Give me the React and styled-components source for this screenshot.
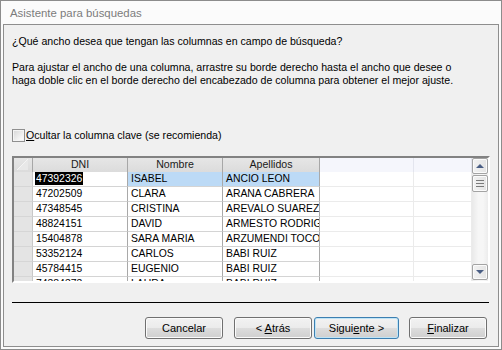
import React from "react"
import styled, { createGlobalStyle } from "styled-components"

const GlobalStyle = createGlobalStyle`
  body {
    margin: 0;
    background: #ffffff;
    font-family: "Liberation Sans", Arial, sans-serif;
  }
`

const rows = [
  ["47392326", "ISABEL", "ANCIO LEON"],
  ["47202509", "CLARA", "ARANA CABRERA"],
  ["47348545", "CRISTINA", "AREVALO SUAREZ"],
  ["48824151", "DAVID", "ARMESTO RODRIGUEZ"],
  ["15404878", "SARA MARIA", "ARZUMENDI TOCORNAL"],
  ["53352124", "CARLOS", "BABI RUIZ"],
  ["45784415", "EUGENIO", "BABI RUIZ"],
  ["74384373", "LAURA", "BABI RUIZ"],
]

// column widths: selector, DNI, Nombre, Apellidos, empty, empty
const COLS = "19px 95px 95px 97px 94px 58px"

const Window = styled.div`
  width: 502px;
  height: 350px;
  box-sizing: border-box;
  border: 1px solid #8c8c8c;
  background: #fbfbfb;
  padding: 0 2px 2px 2px;
  display: flex;
  flex-direction: column;
`

const TitleBar = styled.div`
  height: 23px;
  display: flex;
  align-items: center;
  padding-left: 7px;
  padding-top: 1px;
  box-sizing: border-box;
  font-size: 11.4px;
  color: #7b7b7b;
`

const Client = styled.div`
  flex: 1;
  border: 1px solid #8e8e8e;
  background: #f0f0f0;
  padding: 9px 8px 0 8px;
  display: flex;
  flex-direction: column;
  font-size: 10.6px;
  color: #000;
`

const Question = styled.p`
  margin: 0;
  line-height: 14px;
`

const Help = styled.p`
  margin: 13px 0 0 0;
  line-height: 13px;
`

const CheckRow = styled.label`
  margin-top: 41px;
  height: 14px;
  display: flex;
  align-items: center;
  gap: 1px;
`

const CheckBox = styled.span`
  width: 11px;
  height: 11px;
  border: 1px solid #8f8f8f;
  background: linear-gradient(135deg, #d6d6d6 0%, #f4f4f4 70%, #ffffff 100%);
  box-shadow: inset 0 0 0 1px #f4f4f4;
`

const Grid = styled.div`
  margin-top: 14px;
  height: 127px;
  box-sizing: border-box;
  border-top: 2px solid #828282;
  border-left: 2px solid #828282;
  border-right: 2px solid #ffffff;
  border-bottom: 2px solid #ffffff;
  display: flex;
  background: #ffffff;
`

const Table = styled.div`
  flex: 1;
  overflow: hidden;
`

const Row = styled.div`
  display: grid;
  grid-template-columns: ${COLS};
  height: ${(p) => (p.$head ? "14px" : "15px")};
`

const HeadCell = styled.div`
  box-sizing: border-box;
  border-right: 1px solid ${(p) => (p.$empty ? "#e3e5ee" : "#a7a7a7")};
  border-bottom: 1px solid ${(p) => (p.$empty ? "#e8e8ee" : "#a7a7a7")};
  background: ${(p) => (p.$empty ? "#f5f6fc" : "linear-gradient(#e6e6e6, #dadada)")};
  text-align: center;
  line-height: 13px;
  color: #1a1a1a;
`

const SelCell = styled.div`
  box-sizing: border-box;
  background: #e4e4e4;
  border-bottom: 1px solid #d6d6d6;
  border-right: 1px solid #c8c8c8;
`

const Cell = styled.div`
  box-sizing: border-box;
  border-right: 1px solid ${(p) => (p.$empty ? "#ebebeb" : "#a9a9a9")};
  border-bottom: 1px solid ${(p) => (p.$empty ? "#ebebeb" : "#d4d4d4")};
  background: ${(p) => (p.$hi ? "#bcdaf6" : "#ffffff")};
  padding-left: 3px;
  line-height: 14px;
  font-size: 10.4px;
  white-space: nowrap;
  overflow: hidden;
`

const Selected = styled.span`
  background: #000;
  color: #fff;
  padding: 1px 1px;
  margin-left: -1px;
`

const ScrollBar = styled.div`
  width: 16px;
  display: flex;
  flex-direction: column;
  background: linear-gradient(90deg, #e9e9e9, #f6f6f6 40%, #f6f6f6 70%, #ececec);
  padding: 0 0 1px 0;
  box-sizing: border-box;
`

const ScrollBtn = styled.div`
  height: 16px;
  box-sizing: border-box;
  border: 1px solid #a3a3a3;
  border-radius: 2px;
  background: linear-gradient(90deg, #f2f2f2, #e4e4e4);
  box-shadow: inset 0 0 0 1px #fbfbfb;
  display: flex;
  align-items: center;
  justify-content: center;
  margin-top: ${(p) => (p.$down ? "auto" : "0")};
`

const Thumb = styled(ScrollBtn)`
  height: 17px;
  margin-top: 1px;
`

const Separator = styled.div`
  margin-top: 19px;
  margin-right: 1px;
  height: 1px;
  background: #000;
`

const ButtonRow = styled.div`
  margin-top: 14px;
  display: flex;
  justify-content: flex-end;
  padding-right: 3px;
`

const Button = styled.button`
  width: ${(p) => p.$w || 78}px;
  height: 22px;
  margin-left: ${(p) => p.$gap || 0}px;
  box-sizing: border-box;
  border: 1px solid ${(p) => (p.$focus ? "#3c7fb1" : "#707070")};
  border-radius: 3px;
  background: linear-gradient(#f2f2f2 0%, #ebebeb 50%, #dddddd 50%, #cfcfcf 100%);
  box-shadow: inset 0 0 0 1px ${(p) => (p.$focus ? "#bfe4f6" : "#fbfbfb")};
  font-family: "Liberation Sans", Arial, sans-serif;
  font-size: 11px;
  color: #000;
  padding: 0;
`

const Key = styled.span`
  text-decoration: underline;
`

const Arrow = ({ down }) => (
  <svg width="9" height="5" viewBox="0 0 9 5">
    <polygon points={down ? "0,0 8,0 4,4" : "0,4 8,4 4,0"} fill="#4a5e84" />
  </svg>
)

const Grip = () => (
  <svg width="8" height="7" viewBox="0 0 8 7">
    <rect x="0" y="0" width="8" height="1" fill="#7a7a7a" />
    <rect x="0" y="3" width="8" height="1" fill="#7a7a7a" />
    <rect x="0" y="6" width="8" height="1" fill="#7a7a7a" />
  </svg>
)

const Corner = () => (
  <svg width="18" height="13" viewBox="0 0 18 13">
    <polygon points="3,12 14,1 14,12" fill="#e8e8e8" />
    <line x1="3" y1="12" x2="14" y2="1" stroke="#f4f4f4" strokeWidth="1" />
  </svg>
)

export default function App() {
  return (
    <>
      <GlobalStyle />
      <Window>
        <TitleBar>Asistente para búsquedas</TitleBar>
        <Client>
          <Question>¿Qué ancho desea que tengan las columnas en campo de búsqueda?</Question>
          <Help>
            Para ajustar el ancho de una columna, arrastre su borde derecho hasta el ancho que desee o
            <br />
            haga doble clic en el borde derecho del encabezado de columna para obtener el mejor ajuste.
          </Help>
          <CheckRow>
            <CheckBox />
            <span>
              <Key>O</Key>cultar la columna clave (se recomienda)
            </span>
          </CheckRow>
          <Grid>
            <Table>
              <Row $head>
                <HeadCell>
                  <Corner />
                </HeadCell>
                <HeadCell>DNI</HeadCell>
                <HeadCell>Nombre</HeadCell>
                <HeadCell>Apellidos</HeadCell>
                <HeadCell $empty />
                <HeadCell $empty />
              </Row>
              {rows.map((r, i) => (
                <Row key={r[0]}>
                  <SelCell />
                  <Cell>{i === 0 ? <Selected>{r[0]}</Selected> : r[0]}</Cell>
                  <Cell $hi={i === 0}>{r[1]}</Cell>
                  <Cell $hi={i === 0}>{r[2]}</Cell>
                  <Cell $empty />
                  <Cell $empty />
                </Row>
              ))}
            </Table>
            <ScrollBar>
              <ScrollBtn>
                <Arrow />
              </ScrollBtn>
              <Thumb>
                <Grip />
              </Thumb>
              <ScrollBtn $down>
                <Arrow down />
              </ScrollBtn>
            </ScrollBar>
          </Grid>
          <Separator />
          <ButtonRow>
            <Button>Cancelar</Button>
            <Button $gap={11}>
              &lt; <Key>A</Key>trás
            </Button>
            <Button $gap={2} $w={85} $focus>
              Sigui<Key>e</Key>nte &gt;
            </Button>
            <Button $gap={10}>
              <Key>F</Key>inalizar
            </Button>
          </ButtonRow>
        </Client>
      </Window>
    </>
  )
}
